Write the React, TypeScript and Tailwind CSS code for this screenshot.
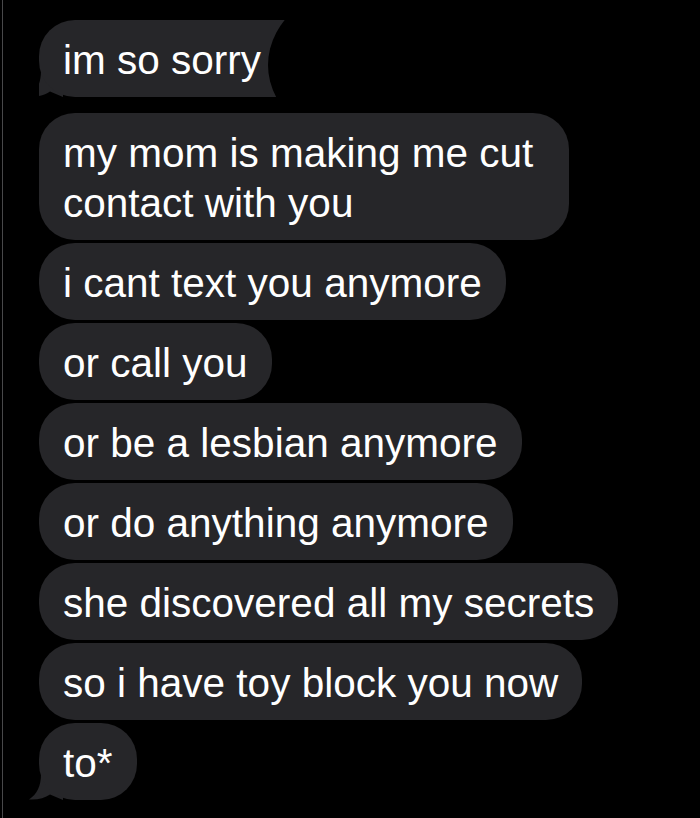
import React from "react";

const bubbleColor = "bg-[#262629]";

function Tail() {
  return (
    <svg
      className="absolute -left-[10px] bottom-0"
      width="34"
      height="26"
      viewBox="0 0 34 26"
    >
      <path
        d="M12 0 C12 12 8 20 0 25.5 C9 26 16 24 21 20.5 L34 26 L34 0 Z"
        fill="#262629"
      />
    </svg>
  );
}

function Bubble({
  children,
  tail = false,
  wide = false,
}: {
  children: React.ReactNode;
  tail?: boolean;
  wide?: boolean;
}) {
  return (
    <div className="relative self-start">
      {tail && <Tail />}
      <div
        className={`relative ${bubbleColor} rounded-[36px] pl-6 ${wide ? "pr-[36px]" : "pr-6"} pt-[15px] pb-[12px] text-white text-[40.5px] leading-[50px] whitespace-nowrap`}
      >
        {children}
      </div>
    </div>
  );
}

export default function App() {
  return (
    <div
      className="relative min-h-[818px] h-[818px] w-[700px] overflow-hidden bg-black"
      style={{ fontFamily: '"Liberation Sans", Arial, sans-serif' }}
    >
      {/* screenshot edge */}
      <div className="absolute left-[2px] top-0 h-full w-px bg-[#48484a]" />

      <main className="flex flex-col pl-[39px] pt-[20px]">
        {/* first message, partly covered by a smudge */}
        <div className="relative h-[93px] overflow-hidden">
          <div className="relative inline-block">
            <Tail />
            <div className={`relative ${bubbleColor} rounded-[36px] pl-6 pr-[70px] pt-[15px] pb-[12px] text-white text-[40.5px] leading-[50px] whitespace-nowrap`}>
              im so sorry
            </div>
          </div>
          <div className="absolute left-[229px] top-[-40px] h-[170px] w-[220px] rounded-[50%] bg-black" />
        </div>

        <div className="flex flex-col gap-[3px]">
          <Bubble wide>
            my mom is making me cut
            <br />
            contact with you
          </Bubble>
          <Bubble>i cant text you anymore</Bubble>
          <Bubble>or call you</Bubble>
          <Bubble>or be a lesbian anymore</Bubble>
          <Bubble>or do anything anymore</Bubble>
          <Bubble>she discovered all my secrets</Bubble>
          <Bubble>so i have toy block you now</Bubble>
          <Bubble tail>to*</Bubble>
        </div>
      </main>
    </div>
  );
}
